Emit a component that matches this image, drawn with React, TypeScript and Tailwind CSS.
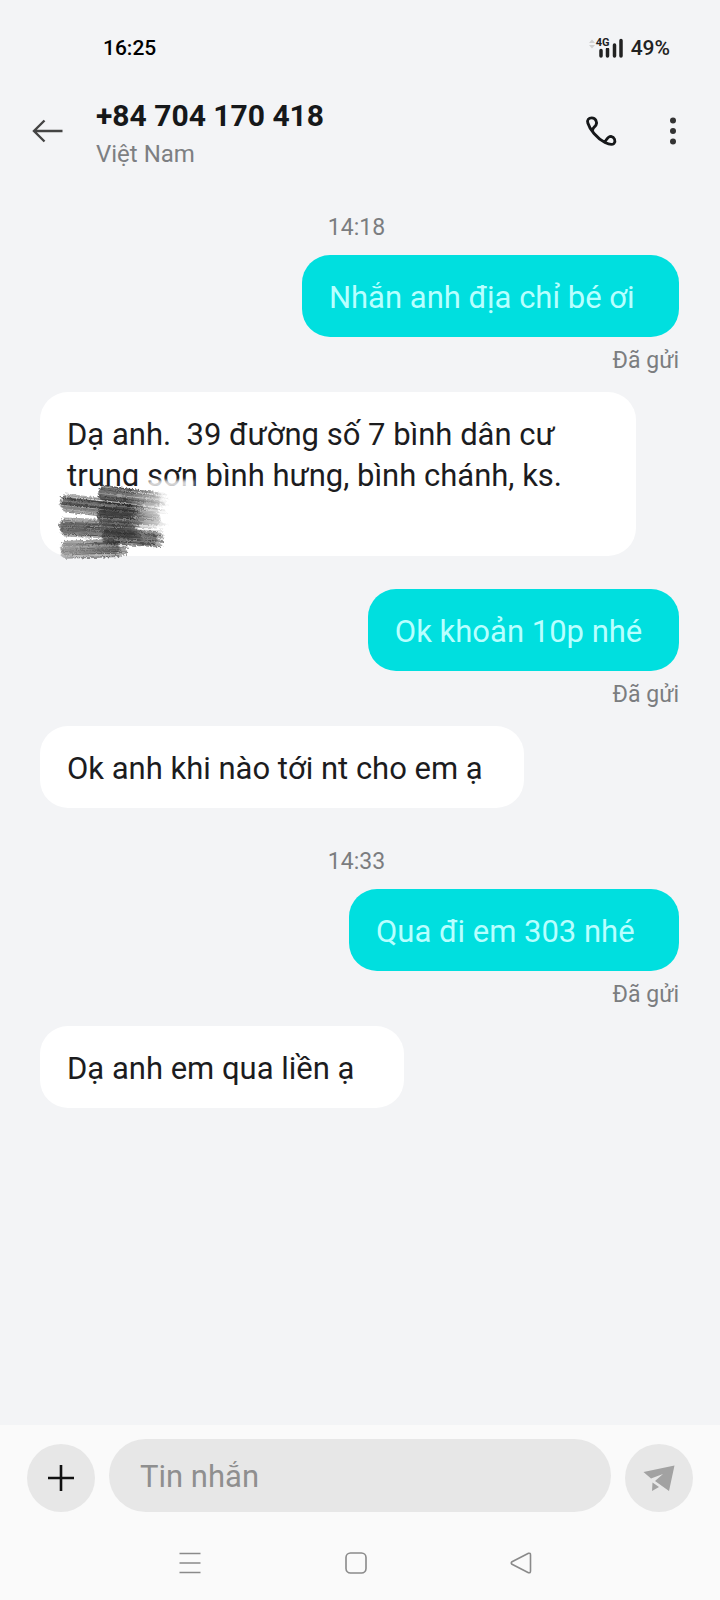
import React, { useMemo } from 'react';

type Message = {
    id: number;
    from: 'me' | 'them';
    text: string;
    time?: string;
    scribbled?: boolean;
};

const MESSAGES: Message[] = [
    { id: 1, from: 'me', text: 'Nhắn anh địa chỉ bé ơi  ', time: '14:18' },
    { id: 2, from: 'them', text: 'Dạ anh.  39 đường số 7 bình dân cư\ntrung sơn bình hưng, bình chánh, ks.\n ', scribbled: true },
    { id: 3, from: 'me', text: 'Ok khoản 10p nhé ' },
    { id: 4, from: 'them', text: 'Ok anh khi nào tới nt cho em ạ ' },
    { id: 5, from: 'me', text: 'Qua đi em 303 nhé  ', time: '14:33' },
    { id: 6, from: 'them', text: 'Dạ anh em qua liền ạ  ' },
];

// Brush strokes of the marker: start, end, thickness, and where the ink is densest
const STROKES = [
    { x1: 39, y1: 10, x2: 112, y2: 17, w: 18, ink: 'url(#inkLeft)' },
    { x1: 1, y1: 19, x2: 88, y2: 27, w: 18, ink: 'url(#inkLeft)' },
    { x1: 38, y1: 32, x2: 112, y2: 35, w: 19, ink: 'url(#inkLeft)' },
    { x1: 0, y1: 43, x2: 88, y2: 46, w: 18, ink: 'url(#inkLeft)' },
    { x1: 42, y1: 52, x2: 110, y2: 55, w: 16, ink: 'url(#inkRight)' },
    { x1: 1, y1: 66, x2: 72, y2: 64, w: 17, ink: 'url(#inkRight)' },
];

// Small seeded generator so the bristles are the same on every render
const seeded = (seed: number) => () => {
    seed = (seed * 16807) % 2147483647;
    return seed / 2147483647;
};

const Scribble: React.FC = () => {
    const bristles = useMemo(() => {
        const rand = seeded(418);
        return STROKES.flatMap((s, i) =>
            Array.from({ length: 26 }, (_, k) => {
                const t = k / 25 - 0.5;
                const off = t * s.w;
                // bristles near the edge of the brush are shorter, so the ends come out round
                const inset = t * t * 18;
                const a = s.x1 + inset + rand() * 3;
                const b = s.x2 - inset - rand() * 12;
                return {
                    key: `${i}-${k}`,
                    d: `M${a} ${s.y1 + off}Q${(a + b) / 2} ${(s.y1 + s.y2) / 2 + off - 1 + rand() * 2} ${b} ${s.y2 + off + 0.1}`,
                    w: 0.4 + rand() * 0.8,
                    o: 0.25 + rand() * 0.6,
                    ink: s.ink,
                };
            })
        );
    }, []);

    return (
        <svg className="absolute top-[84px] left-[18px] h-[84px] w-[150px]" viewBox="0 -8 150 84" aria-hidden="true">
            <defs>
                <linearGradient id="inkLeft" gradientUnits="userSpaceOnUse" x1="0" y1="0" x2="108" y2="0">
                    <stop offset="0" stopColor="#222" stopOpacity="0.85" />
                    <stop offset="0.65" stopColor="#222" stopOpacity="0.9" />
                    <stop offset="1" stopColor="#555" stopOpacity="0.2" />
                </linearGradient>
                <linearGradient id="inkRight" gradientUnits="userSpaceOnUse" x1="0" y1="0" x2="108" y2="0">
                    <stop offset="0" stopColor="#444" stopOpacity="0.6" />
                    <stop offset="0.55" stopColor="#222" stopOpacity="0.9" />
                    <stop offset="1" stopColor="#222" />
                </linearGradient>
                <filter id="smudge" filterUnits="userSpaceOnUse" x="80" y="-12" width="70" height="24">
                    <feGaussianBlur stdDeviation="1.5" />
                </filter>
                <filter id="rough" filterUnits="userSpaceOnUse" x="-4" y="-8" width="120" height="88">
                    <feTurbulence type="fractalNoise" baseFrequency="0.5" numOctaves="2" seed="7" result="noise" />
                    <feDisplacementMap in="SourceGraphic" in2="noise" scale="4" />
                </filter>
            </defs>
            <path d="M90 0H136" stroke="#fff" strokeWidth="8" strokeOpacity="0.8" filter="url(#smudge)" />
            <path d="M10 7H110" stroke="#fff" strokeWidth="10" />
            <g filter="url(#rough)" fill="none">
                {STROKES.map((s, i) => (
                    <path key={i} d={`M${s.x1 + 7} ${s.y1}L${s.x2 - 16} ${s.y2 + 0.1}`} stroke={s.ink} strokeWidth={s.w - 6} strokeOpacity="0.4" strokeLinecap="round" />
                ))}
                {bristles.map(b => (
                    <path key={b.key} d={b.d} stroke={b.ink} strokeWidth={b.w} strokeOpacity={b.o} />
                ))}
            </g>
        </svg>
    );
};

const StatusBar: React.FC = () => (
    <div className="flex items-center justify-between pt-9 pr-[50px] pl-[103px] text-[21px] leading-6 font-medium text-black">
        <span>16:25</span>
        <div className="flex items-center gap-2 text-[#222]">
            <div className="relative">
                <svg className="block h-5 w-[34px]" viewBox="0 0 34 20" aria-hidden="true">
                    <path d="M0 5L3 1.500L6 5ZM0 7L3 10.500L6 7Z" fill="#d0d0d0" />
                    <path d="M12 12.500V18M18.500 11V18M25.500 7V18M32 2.500V18" stroke="#222" strokeWidth="3.500" strokeLinecap="round" />
                </svg>
                <span className="absolute -top-px left-[7px] bg-[#f3f4f6] text-[11px] leading-[11px] font-bold">4G</span>
            </div>
            <span>49%</span>
        </div>
    </div>
);

const Header: React.FC = () => (
    <header className="flex items-center pt-[30px] pr-[29px] pl-[31px]">
        <button aria-label="Quay lại" className="mr-[33px] shrink-0">
            <svg className="block h-8 w-8" viewBox="0 0 32 32" fill="none" stroke="#444" strokeWidth="2.400">
                <path d="M31.500 16H3M13.500 5.500L3 16L13.500 26.500" />
            </svg>
        </button>
        <div className="grow pt-[6px]">
            <h1 className="text-[30px] leading-10 font-bold text-[#16181a]">+84 704 170 418</h1>
            <p className="text-[24px] leading-9 text-[#7d7f82]">Việt Nam</p>
        </div>
        <button aria-label="Gọi" className="mr-9 shrink-0">
            <svg className="block h-9 w-9" viewBox="0 0 36 36" fill="none" stroke="#16181a" strokeWidth="2.800" strokeLinejoin="round" strokeLinecap="round">
                <path d="M9.800 17C9.500 14.500 12 14 13 12C14.500 9 12.500 4.800 8.800 4.800C5.500 4.800 4 7 4.800 10C6 14 8 17 11 20.500C14 24 18 27.500 22 29.500C26 31.500 29.500 31.800 31 30.500C33 28 31.500 24 28 23.300C24.500 23 24 27 21.500 28.800" />
            </svg>
        </button>
        <button aria-label="Thêm tùy chọn" className="shrink-0">
            <svg className="block h-9 w-9" viewBox="0 0 36 36" fill="#333">
                <circle cx="18" cy="7.500" r="3" />
                <circle cx="18" cy="18" r="3" />
                <circle cx="18" cy="28.500" r="3" />
            </svg>
        </button>
    </header>
);

const MessageRow: React.FC<{ message: Message }> = ({ message }) => {
    const mine = message.from === 'me';

    return (
        <div className="flex flex-col">
            {message.time && (
                <time className="mb-[13px] self-center pr-[6px] text-[23px] leading-7 text-[#7b7d80]">{message.time}</time>
            )}
            <div
                className={`
                    relative w-fit rounded-[28px] pt-[22px] pb-[19px] pl-[27px] text-[31px] leading-[41px] whitespace-pre
                    ${mine ? 'self-end bg-[#00dfdf] pr-[29px] text-[#b8ffff]' : 'bg-white pr-[34px] text-[#1c1c1e]'}
                    ${message.scribbled ? 'min-w-[596px]' : ''}
                `}
            >
                {message.text}
                {message.scribbled && <Scribble />}
            </div>
            {mine && <span className="mt-[10px] self-end text-[23px] leading-7 text-[#7b7d80]">Đã gửi</span>}
        </div>
    );
};

const Composer: React.FC = () => (
    <form className="flex items-end gap-[14px] px-[27px] pt-[14px]" onSubmit={e => e.preventDefault()}>
        <button type="button" aria-label="Đính kèm" className="flex size-[68px] shrink-0 items-center justify-center rounded-full bg-[#e7e7e7]">
            <svg className="size-[26px]" viewBox="0 0 26 26" stroke="#111" strokeWidth="2.600">
                <path d="M13 0V26M0 13H26" />
            </svg>
        </button>
        <input
            aria-label="Tin nhắn"
            placeholder="Tin nhắn"
            className="h-[73px] min-w-0 grow rounded-full bg-[#e7e7e7] px-[31px] pt-[2px] text-[31px] text-[#1c1c1e] outline-none placeholder:text-[#8f8f8f]"
        />
        <button type="submit" aria-label="Gửi" className="flex size-[68px] shrink-0 items-center justify-center rounded-full bg-[#e7e7e7]">
            <svg className="h-[26px] w-8" viewBox="0 0 32 26" fill="#a2a2a2">
                <path d="M0.500 7L31.500 0.500L26 26L12 16L20 9L8 13.500ZM9.500 17.500L16 22L9 26Z" />
            </svg>
        </button>
    </form>
);

const NavBar: React.FC = () => (
    <nav className="flex justify-between pt-10 pr-[188px] pb-[26px] pl-[179px]">
        <button aria-label="Gần đây">
            <svg className="block size-[22px]" viewBox="0 0 22 22" stroke="#8a8a8a" strokeWidth="1.600">
                <path d="M0.500 1.500H21.500M0.500 11H21.500M0.500 20.500H21.500" />
            </svg>
        </button>
        <button aria-label="Trang chủ">
            <svg className="block size-[22px]" viewBox="0 0 22 22" fill="none" stroke="#8a8a8a" strokeWidth="1.600">
                <rect x="1" y="1" width="20" height="20" rx="4.500" />
            </svg>
        </button>
        <button aria-label="Trở về">
            <svg className="block size-[22px]" viewBox="0 0 22 22" fill="none" stroke="#8a8a8a" strokeWidth="1.600" strokeLinejoin="round">
                <path d="M2 9.700L18.500 1.300Q20.500 0.800 20.500 3V19Q20.500 21.200 18.500 20.700L2 12.300Q0.500 11 2 9.700Z" />
            </svg>
        </button>
    </nav>
);

export default function App() {
    return (
        <div className="flex min-h-screen flex-col bg-[#f3f4f6] font-['Roboto',sans-serif]">
            <StatusBar />
            <Header />
            <main className="grow pt-[42px] pr-[41px] pl-10">
                <ol className="flex flex-col">
                    {MESSAGES.map((m, i) => {
                        const prev = MESSAGES[i - 1];
                        let gap = 'mt-0';
                        if (prev) gap = m.time ? 'mt-10' : prev.from === 'me' ? 'mt-[17px]' : 'mt-[33px]';
                        return (
                            <li key={m.id} className={gap}>
                                <MessageRow message={m} />
                            </li>
                        );
                    })}
                </ol>
            </main>
            <footer className="bg-[#fafafa]">
                <Composer />
                <NavBar />
            </footer>
        </div>
    );
}
